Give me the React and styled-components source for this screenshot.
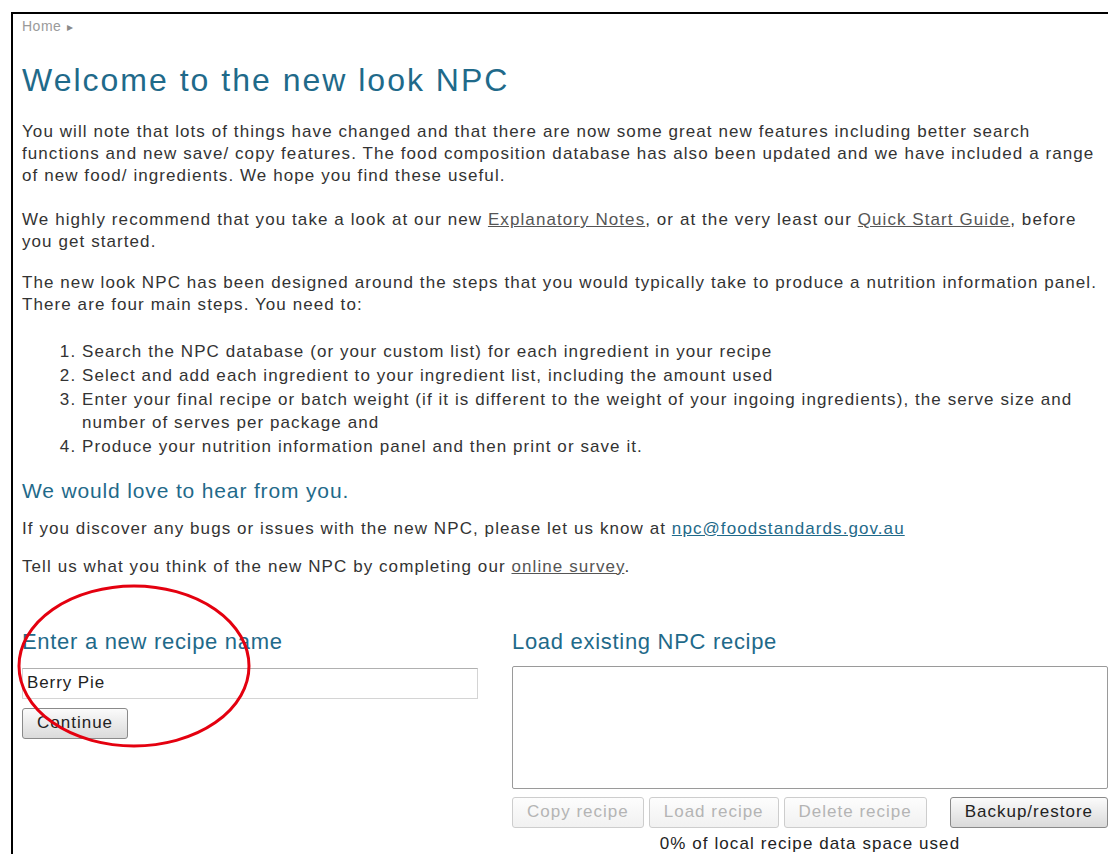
import React, { useState } from 'react';
import styled, { createGlobalStyle } from 'styled-components';

const GlobalStyle = createGlobalStyle`
  html, body {
    margin: 0;
    padding: 0;
    background: #fff;
  }
  body {
    font-family: "Liberation Sans", Arial, sans-serif;
    color: #333;
  }
`;

const steps = [
  'Search the NPC database (or your custom list) for each ingredient in your recipe',
  'Select and add each ingredient to your ingredient list, including the amount used',
  'Enter your final recipe or batch weight (if it is different to the weight of your ingoing ingredients), the serve size and number of serves per package and',
  'Produce your nutrition information panel and then print or save it.',
];

function App() {
  const [recipeName, setRecipeName] = useState('Berry Pie');

  return (
    <>
      <GlobalStyle />
      <Frame>
        <Crumbs>Home<Arrow>▸</Arrow></Crumbs>
        <Title>Welcome to the new look NPC</Title>

        <Para>
          You will note that lots of things have changed and that there are now some great new features including better search
          functions and new save/ copy features. The food composition database has also been updated and we have included a range
          of new food/ ingredients. We hope you find these useful.
        </Para>
        <Para $after={19}>
          We highly recommend that you take a look at our new <Link href="#">Explanatory Notes</Link>, or at the very least our{' '}
          <Link href="#">Quick Start Guide</Link>, before you get started.
        </Para>
        <Para $after={24}>
          The new look NPC has been designed around the steps that you would typically take to produce a nutrition information panel.
          There are four main steps. You need to:
        </Para>

        <Steps>
          {steps.map((s) => <li key={s}>{s}</li>)}
        </Steps>

        <SubTitle>We would love to hear from you.</SubTitle>
        <Para $after={16}>
          If you discover any bugs or issues with the new NPC, please let us know at{' '}
          <Link href="#" $accent>npc@foodstandards.gov.au</Link>
        </Para>
        <Para $after={0}>
          Tell us what you think of the new NPC by completing our <Link href="#">online survey</Link>.
        </Para>

        <Panels>
          <Column>
            <PanelTitle>Enter a new recipe name</PanelTitle>
            <NameInput value={recipeName} onChange={(e) => setRecipeName(e.target.value)} />
            <div><Button>Continue</Button></div>
            <Ring viewBox="0 0 240 170">
              <ellipse cx="120" cy="85" rx="115" ry="80" fill="none" stroke="#e4000f" strokeWidth="3" />
            </Ring>
          </Column>

          <Column>
            <PanelTitle $tight>Load existing NPC recipe</PanelTitle>
            <RecipeList size={6} />
            <ButtonRow>
              <Button disabled>Copy recipe</Button>
              <Button disabled>Load recipe</Button>
              <Button disabled>Delete recipe</Button>
              <Button>Backup/restore</Button>
            </ButtonRow>
            <Usage>0% of local recipe data space used</Usage>
          </Column>
        </Panels>
      </Frame>
    </>
  );
}

const Frame = styled.div`
  margin: 12px 0 0 11px;
  border-top: 2px solid #000;
  border-left: 2px solid #000;
  padding: 3px 0 0 9px;
  min-height: 840px;
  font-size: 17px;
  line-height: 22px;
  letter-spacing: 1.08px;
`;

const Crumbs = styled.div`
  font-size: 14px;
  line-height: 18px;
  letter-spacing: 0.5px;
  color: #9a9a9a;
`;

const Arrow = styled.span`
  margin-left: 6px;
  font-size: 12px;
  color: #8a8a8a;
`;

const Title = styled.h1`
  margin: 24px 0 21px;
  font-size: 32px;
  line-height: 40px;
  letter-spacing: 2px;
  font-weight: normal;
  color: #1f6a8a;
`;

const Para = styled.p`
  margin: 0 0 ${(p) => (p.$after ?? 22)}px;
  width: 1080px;
`;

const Link = styled.a`
  color: ${(p) => (p.$accent ? '#1f6a8a' : '#555')};
  text-decoration: underline;
`;

const Steps = styled.ol`
  margin: 0 0 18px;
  padding-left: 60px;
  width: 1020px;
  li { line-height: 23.75px; }
`;

const SubTitle = styled.h2`
  margin: 0 0 13px;
  font-size: 21px;
  line-height: 28px;
  letter-spacing: 0.85px;
  font-weight: normal;
  color: #1f6a8a;
`;

const Panels = styled.div`
  display: grid;
  grid-template-columns: 456px 596px;
  column-gap: 34px;
  margin-top: 50px;
`;

const Column = styled.div`
  position: relative;
  display: flex;
  flex-direction: column;
`;

const PanelTitle = styled.h3`
  margin: 0 0 ${(p) => (p.$tight ? 10 : 12)}px;
  font-size: 22px;
  line-height: 28px;
  letter-spacing: 0.7px;
  font-weight: normal;
  color: #1f6a8a;
`;

const NameInput = styled.input`
  box-sizing: border-box;
  height: 31px;
  padding: 2px 4px;
  border: 1px solid #d4d4d4;
  border-top-color: #b0b0b0;
  font: inherit;
  letter-spacing: 0.9px;
  color: #222;
  margin-bottom: 9px;
  outline: none;
`;

const RecipeList = styled.select`
  box-sizing: border-box;
  height: 123px;
  border: 1px solid #9a9a9a;
  background: #fff;
  margin-bottom: 8px;
`;

const ButtonRow = styled.div`
  display: flex;
  gap: 5px;
  button:last-child { margin-left: auto; }
`;

const Button = styled.button`
  height: 31px;
  padding: 0 14px;
  font: inherit;
  letter-spacing: 1px;
  color: #222;
  border: 1px solid #8a8a8a;
  border-radius: 3px;
  background: linear-gradient(#fbfbfb, #dadada);
  &:disabled {
    color: #b4b4b4;
    border-color: #cdcdcd;
    background: linear-gradient(#fdfdfd, #f1f1f1);
  }
`;

const Usage = styled.div`
  text-align: center;
  margin-top: 5px;
  color: #222;
`;

const Ring = styled.svg`
  position: absolute;
  left: -8px;
  top: -47px;
  width: 240px;
  height: 170px;
  pointer-events: none;
`;

export default App;
